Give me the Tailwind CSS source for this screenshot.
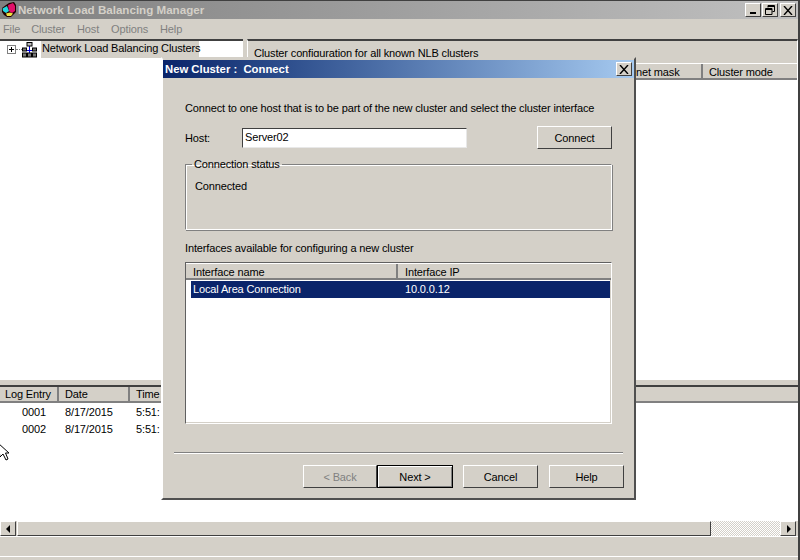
<!DOCTYPE html>
<html><head><meta charset="utf-8"><script src="https://cdn.jsdelivr.net/npm/@tailwindcss/browser@4"></script></head>
<body class="m-0">
<div class="relative w-[800px] h-[560px] overflow-hidden bg-[#d4d0c8] font-['Liberation_Sans',Arial,sans-serif] text-[11px] tracking-[-0.14px] leading-[14px] text-black flex flex-col border-r-2 border-r-[#404040]">
  <!-- Title bar -->
  <div class="h-[19px] shrink-0 flex items-center border-t border-t-[#404040] bg-gradient-to-r from-[#808080] to-[#c0c0c0]">
    <svg class="ml-[1px] w-[16px] h-[16px]" viewBox="0 0 16 16"><path d="M1 6l4-3 3-2 5-1 2 3v7l-3 3-2 2H6l-3-2-2-3z" fill="#200" /><path d="M7 3l5-2 2 3v5l-3 2-3-2z" fill="#e0106a"/><path d="M1.500 6.500L6 4l2 5-3 2-3-2z" fill="#20d8e0"/><path d="M5 11.500l4-1 3 1-2 2.500H6z" fill="#f0e040"/></svg>
    <span class="font-bold ml-[1px] text-[#d4d0c8] text-[11.6px] tracking-normal">Network Load Balancing Manager</span>
    <div class="ml-auto flex mr-[2px] gap-0">
      <div class="w-[16px] h-[14px] bg-[#d4d0c8] border border-t-white border-l-white border-r-[#404040] border-b-[#404040] relative mr-[0px]"><div class="absolute left-[4px] bottom-[2px] w-[6px] h-[2px] bg-black"></div></div>
      <div class="w-[16px] h-[14px] ml-[1px] bg-[#d4d0c8] border border-t-white border-l-white border-r-[#404040] border-b-[#404040] flex items-center justify-center"><svg class="w-[10px] h-[10px]" viewBox="0 0 10 10" fill="none" stroke="#000"><path d="M3 2.500V.5h6.500v6H7.500M3 1.500h6.500M.5 3.500h6.500v6H.5zM.5 4.500h6.500"/></svg></div>
      <div class="w-[16px] h-[14px] ml-[2px] bg-[#d4d0c8] border border-t-white border-l-white border-r-[#404040] border-b-[#404040] flex items-center justify-center"><svg class="w-[10px] h-[9px]" viewBox="0 0 10 9" stroke="#000" stroke-width="1.4"><path d="M1 0l8 9M9 0L1 9"/></svg></div>
    </div>
  </div>
  <!-- Menu -->
  <div class="h-[20px] shrink-0 flex items-center gap-[12px] pl-[3px] text-[#808080]"><span class="mr-[-1px]">File</span><span>Cluster</span><span>Host</span><span>Options</span><span>Help</span></div>
  <!-- Panes -->
  <div class="h-[340px] shrink-0 flex">
    <div class="w-[243px] shrink-0 bg-white border-t-2 border-t-[#404040] flex items-start pl-[7px]">
      <div class="flex items-center h-[17px]">
        <div class="w-[9px] h-[9px] shrink-0 border border-[#808080] flex items-center justify-center relative bg-white"><div class="w-[5px] h-px bg-black"></div><div class="absolute w-px h-[5px] bg-black"></div></div>
        <div class="w-[6px] shrink-0 border-t border-dotted border-[#808080]"></div>
        <svg class="w-[15px] h-[16px] shrink-0" viewBox="0 0 15 16"><path d="M7.500 4v8M3 8.500h9" stroke="#0000e0" fill="none"/><rect x="5" y="0.500" width="5" height="3.500" fill="#bbb" stroke="#000"/><g fill="#777" stroke="#000"><rect x="0.500" y="6" width="4" height="3"/><rect x="10.500" y="6" width="4" height="3"/><rect x="0.500" y="11" width="4" height="4"/><rect x="5.500" y="11" width="4" height="4"/><rect x="10.500" y="11" width="4" height="4"/></g></svg>
        <span class="ml-[4px] bg-[#d4d0c8] pl-[1px] h-[17px] leading-[15px] w-[158px] whitespace-nowrap">Network Load Balancing Clusters</span>
      </div>
    </div>
    <div class="w-[4px]"></div>
    <div class="flex-1 flex flex-col border-t-2 border-t-[#404040] border-l border-l-white border-r border-r-white">
      <div class="h-[22px] shrink-0 pl-[6px] pt-[5px]">Cluster configuration for all known NLB clusters</div>
      <div class="h-[17px] shrink-0 flex bg-[#d4d0c8] border-b-2 border-b-[#808080] border-t border-t-white">
        <div class="w-[455px] border-r-2 border-r-[#808080]"></div>
        <div class="pl-[6px] leading-[16px]">Cluster mode</div>
      </div>
      <div class="flex-1 bg-white"></div>
    </div>
  </div>
  <!-- Splitter -->
  <div class="h-[6px] shrink-0 border-t border-t-white"></div>
  <!-- Log pane -->
  <div class="h-[136px] shrink-0 flex flex-col bg-white border-t-2 border-t-[#404040]">
    <div class="h-[16px] shrink-0 flex bg-[#d4d0c8] border-b-2 border-b-[#808080]">
      <div class="w-[59px] pl-[5px] border-r-2 border-r-[#808080] leading-[14px]">Log Entry</div>
      <div class="w-[71px] pl-[6px] border-r-2 border-r-[#808080] leading-[14px]">Date</div>
      <div class="pl-[6px] leading-[14px]">Time</div>
    </div>
    <div class="flex h-[17px] items-center"><div class="w-[59px] pl-[22px]">0001</div><div class="w-[71px] pl-[6px]">8/17/2015</div><div class="pl-[6px]">5:51:</div></div>
    <div class="flex h-[17px] items-center"><div class="w-[59px] pl-[22px]">0002</div><div class="w-[71px] pl-[6px]">8/17/2015</div><div class="pl-[6px]">5:51:</div></div>
  </div>
  <!-- Scrollbar -->
  <div class="h-[16px] shrink-0 flex border-b border-b-white">
    <div class="w-[16px] h-[15px] bg-[#d4d0c8] border border-t-white border-l-white border-r-[#404040] border-b-[#404040] flex items-center justify-center"><svg class="w-[5px] h-[8px]" viewBox="0 0 5 8"><path d="M4 0v8L0 4z"/></svg></div>
    <div class="w-[694px] ml-[1px] h-[15px] bg-[#d4d0c8] border border-t-white border-l-white border-r-[#404040] border-b-[#404040]"></div>
    <div class="flex-1 h-[15px] bg-[repeating-conic-gradient(#d4d0c8_0_25%,#ffffff_0_50%)] bg-[length:2px_2px]"></div>
    <div class="w-[16px] h-[15px] mr-[2px] bg-[#d4d0c8] border border-t-white border-l-white border-r-[#404040] border-b-[#404040] flex items-center justify-center"><svg class="w-[5px] h-[8px]" viewBox="0 0 5 8"><path d="M1 0v8l4-4z"/></svg></div>
  </div>
  <!-- Status -->
  <div class="h-[20px] shrink-0 border-b border-b-white"></div>

  <!-- Mouse pointer -->
  <svg class="absolute left-0 top-[443px] w-[12px] h-[20px]" viewBox="0 0 12 20"><path d="M-2 0L9 10H5.500L8 16l-2 1-3-6-3 3z" fill="#fff" stroke="#000"/></svg>

  <!-- Heading cut off by the dialog -->
  <div class="absolute left-[636px] top-[65px] leading-[14px]">net mask</div>

  <!-- Dialog -->
  <div class="absolute left-[161px] top-[57px] w-[475px] h-[443px] bg-[#d4d0c8] border-t-2 border-l-2 border-r-2 border-b-2 border-t-[#d4d0c8] border-l-white border-r-[#505050] border-b-[#505050] flex flex-col">
    <div class="h-[18px] shrink-0 mt-px flex items-center bg-gradient-to-r from-[#0a246a] to-[#a6caf0] text-white font-bold text-[11.3px] tracking-normal pl-[2px]">
      <span class="whitespace-pre">New Cluster :  Connect</span>
      <div class="ml-auto mr-[2px] w-[16px] h-[14px] bg-[#d4d0c8] border border-t-white border-l-white border-r-[#404040] border-b-[#404040] flex items-center justify-center"><svg class="w-[10px] h-[9px]" viewBox="0 0 10 9" stroke="#000" stroke-width="1.4"><path d="M1 0l8 9M9 0L1 9"/></svg></div>
    </div>
    <div class="flex-1 flex flex-col pl-[22px] pr-[21px]">
      <p class="mt-[23px] whitespace-nowrap">Connect to one host that is to be part of the new cluster and select the cluster interface</p>
      <div class="flex items-center mt-[11px] mr-[1px] h-[23px]">
        <span class="w-[57px]">Host:</span>
        <div class="w-[225px] h-[20px] bg-white border border-t-[#404040] border-l-[#404040] border-r-[#e8e8e8] border-b-[#e8e8e8] pl-[2px] leading-[16px]">Server02</div>
        <div class="ml-auto w-[75px] h-[23px] bg-[#d4d0c8] border border-t-white border-l-white border-r-[#404040] border-b-[#404040] flex items-center justify-center">Connect</div>
      </div>
      <fieldset class="mt-[9px] mr-[1px] h-[72px] border border-t-[#808080] border-l-[#808080] border-r-white border-b-white shadow-[inset_1px_1px_0_#fff,1px_1px_0_#808080]">
        <legend class="ml-[6px] px-[2px] leading-[13px]">Connection status</legend>
        <p class="pl-[9px] mt-[8px]">Connected</p>
      </fieldset>
      <p class="mt-[11px]">Interfaces available for configuring a new cluster</p>
      <div class="mt-[7px] mr-[1px] h-[162px] bg-white border border-t-[#606060] border-l-[#606060] border-r-white border-b-white shadow-[inset_-1px_-1px_0_#d4d0c8] flex flex-col">
        <div class="h-[17px] shrink-0 flex bg-[#d4d0c8] border-b-2 border-b-[#808080] border-t border-t-white">
          <div class="w-[212px] pl-[7px] border-r-2 border-r-[#808080] leading-[16px]">Interface name</div>
          <div class="pl-[7px] leading-[16px]">Interface IP</div>
        </div>
        <div class="flex h-[17px] mt-px ml-[5px] mr-px bg-[#0a246a] text-white leading-[17px]">
          <span class="w-[214px] pl-[2px]">Local Area Connection</span><span>10.0.0.12</span>
        </div>
      </div>
      <div class="mt-[28px] -ml-[11px] -mr-[10px] h-[2px] border-t border-t-[#808080] border-b border-b-white"></div>
      <div class="flex mt-[11px] -mr-[11px] justify-end">
        <div class="w-[74px] h-[23px] bg-[#d4d0c8] border border-t-white border-l-white border-r-[#404040] border-b-[#404040] flex items-center justify-center text-[#808080]">&lt; Back</div>
        <div class="w-[76px] h-[23px] bg-[#d4d0c8] border border-black shadow-[inset_1px_1px_0_#fff,inset_-1px_-1px_0_#808080] flex items-center justify-center">Next &gt;</div>
        <div class="ml-[10px] w-[75px] h-[23px] bg-[#d4d0c8] border border-t-white border-l-white border-r-[#404040] border-b-[#404040] flex items-center justify-center">Cancel</div>
        <div class="ml-[11px] w-[75px] h-[23px] bg-[#d4d0c8] border border-t-white border-l-white border-r-[#404040] border-b-[#404040] flex items-center justify-center">Help</div>
      </div>
    </div>
  </div>
</div>
</body></html>
